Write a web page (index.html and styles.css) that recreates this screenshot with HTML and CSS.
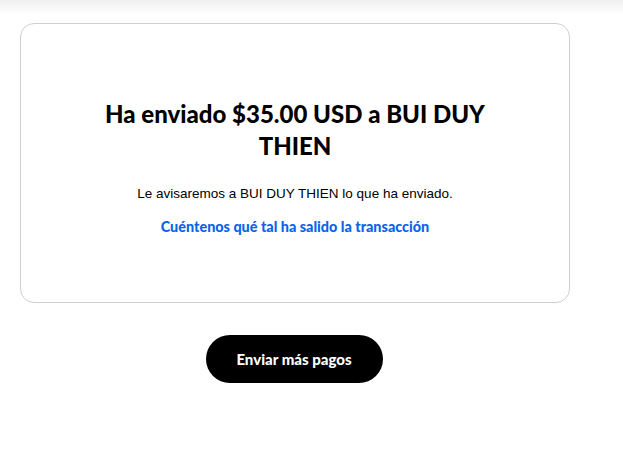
FILE: index.html
```html
<!DOCTYPE html>
<html lang="es">
  <head>
    <meta charset="utf-8">
    <title>Pago enviado</title>
    <link rel="stylesheet" href="styles.css">
  </head>
<body>
  <div class="topbar"></div>
  <main class="page">
    <section class="card">
      <h1 class="title">Ha enviado $35.00 USD a BUI DUY THIEN</h1>
      <p class="note">Le avisaremos a BUI DUY THIEN lo que ha enviado.</p>
      <a class="feedback" href="#">Cuéntenos qué tal ha salido la transacción</a>
    </section>
    <div class="actions">
      <button class="send-more">Enviar más pagos</button>
    </div>
  </main>
</body>
</html>
```

FILE: styles.css
```css
html {
    background: #fff;
}
body {
    margin: 0;
    font-family: "Lato", "Liberation Sans", sans-serif;
    color: #000;
}
.topbar {
    height: 14px;
    background: linear-gradient(#efefef, #fff);
}
.page {
    width: 550px;
    padding-left: 20px;
    padding-top: 9px;
}
.card {
    border: 1px solid #cfcfcf;
    border-radius: 14px;
    padding: 74px 60px 65px;
    display: flex;
    flex-direction: column;
    align-items: center;
    text-align: center;
}
.title {
    max-width: 400px;
    margin: 0;
    font-size: 24px;
    line-height: 32px;
    font-weight: 900;
}
.note {
    margin: 22px 0 0;
    font-family: "Liberation Sans", Arial, sans-serif;
    font-size: 13.5px;
    line-height: 20px;
}
.feedback {
    margin-top: 13px;
    font-size: 14.4px;
    line-height: 20px;
    font-weight: 900;
    color: #0b63e8;
    text-decoration: none;
}
.actions {
    display: flex;
    justify-content: center;
    padding-top: 32px;
}
.send-more {
    width: 177px;
    height: 48px;
    margin-left: -2px;
    border: 0;
    border-radius: 24px;
    background: #000;
    color: #fff;
    font-family: "Lato", sans-serif;
    font-weight: 900;
    font-size: 15px;
    cursor: pointer;
}
```
